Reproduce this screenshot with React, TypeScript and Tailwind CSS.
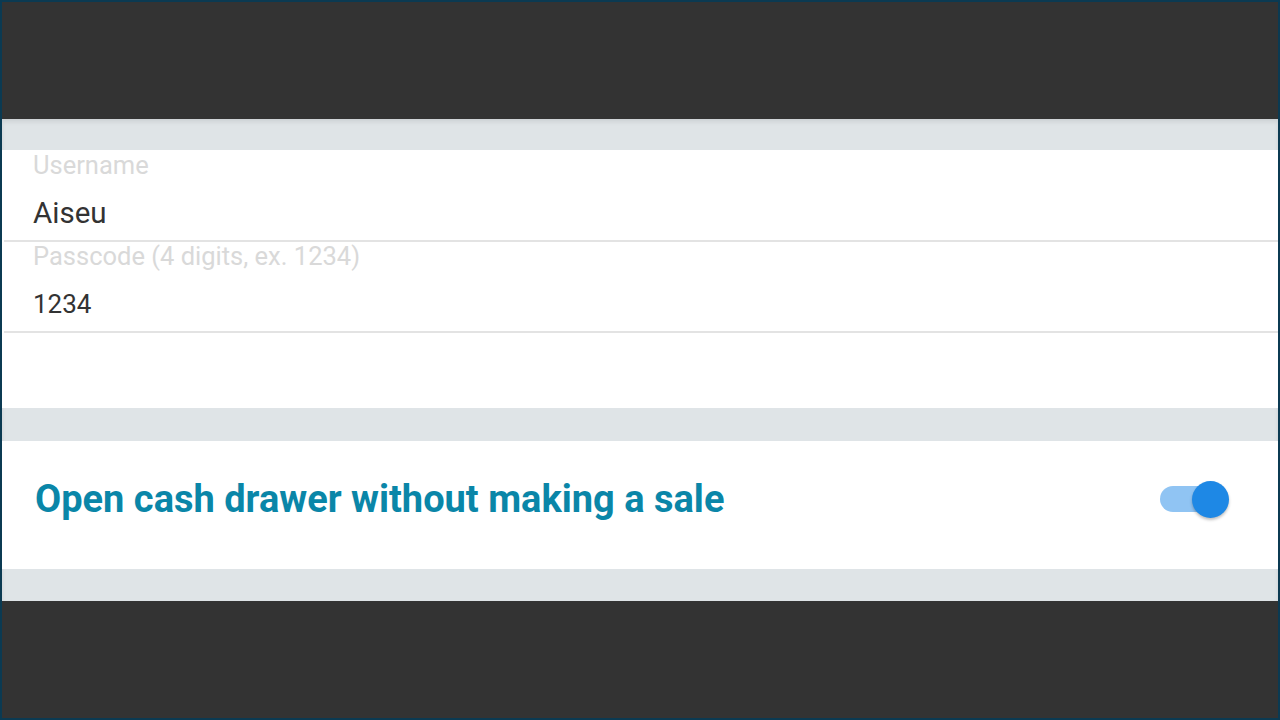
import { useState } from 'react';

const Field = ({ label, value, size }: { label: string; value: string; size: string }) => (
  <div className="ml-[2px] h-[91px] border-b-2 border-[#e3e3e3] pl-[29px] flex flex-col">
    <span className="-mt-[1px] text-[25.5px] leading-[30px] text-[#d9d9d9]">{label}</span>
    <span className={`mt-[16px] ${size} leading-[34px] text-[#333333]`}>{value}</span>
  </div>
);

const App = () => {
  const [open, setOpen] = useState(true);

  return (
    <div
      className="h-[720px] w-[1280px] border-2 border-[#0b3a52] bg-[#333333] flex flex-col overflow-hidden"
      style={{ fontFamily: 'Roboto, "Noto Sans", sans-serif' }}
    >
      {/* Top bar */}
      <div className="h-[117px] bg-[#333333] shrink-0" />

      <div className="flex-1 bg-[#dfe4e7] flex flex-col shadow-[inset_0_3px_4px_rgba(0,0,0,0.08)]">
        <div className="h-[31px]" />

        {/* Credentials */}
        <div className="h-[258px] bg-white flex flex-col pt-[1px]">
          <Field label="Username" value="Aiseu" size="text-[29.5px]" />
          <Field label="Passcode (4 digits, ex. 1234)" value="1234" size="text-[26px]" />
        </div>

        <div className="h-[33px]" />

        {/* Toggle row */}
        <div className="h-[128px] bg-white flex items-center justify-between pl-[33px] pr-[48px] pb-[12px]">
          <span className="text-[38px] font-bold text-[#0a86a8]">
            Open cash drawer without making a sale
          </span>
          <button
            onClick={() => setOpen(!open)}
            className="relative w-[70px] h-[38px] flex items-center"
          >
            <span
              className={`absolute left-[0px] w-[60px] h-[26px] rounded-full ${open ? 'bg-[#90c4f3]' : 'bg-[#c4c4c4]'}`}
            />
            <span
              className={`absolute w-[37px] h-[37px] rounded-full shadow-[0_2px_3px_rgba(0,0,0,0.25)] ${open ? 'left-[32px] bg-[#1e88e5]' : 'left-[0px] bg-[#f5f5f5]'}`}
            />
          </button>
        </div>

        <div className="h-[32px]" />
      </div>

      {/* Bottom bar */}
      <div className="h-[117px] bg-[#333333] shrink-0" />
    </div>
  );
};

export default App;
